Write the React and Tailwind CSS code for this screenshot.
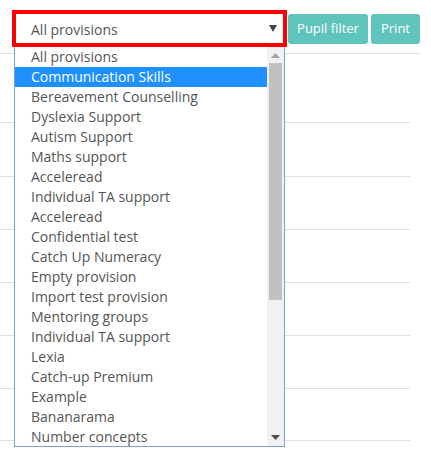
const items = [
  'All provisions',
  'Communication Skills',
  'Bereavement Counselling',
  'Dyslexia Support',
  'Autism Support',
  'Maths support',
  'Acceleread',
  'Individual TA support',
  'Acceleread',
  'Confidential test',
  'Catch Up Numeracy',
  'Empty provision',
  'Import test provision',
  'Mentoring groups',
  'Individual TA support',
  'Lexia',
  'Catch-up Premium',
  'Example',
  'Bananarama',
  'Number concepts',
]

const App = () => {
  return (
    <div className="relative w-[431px] h-[458px] bg-white overflow-hidden text-[#555] font-['Open_Sans',sans-serif]">
      {/* toolbar */}
      <div className="h-[53px] pt-[10px] pl-[12px] flex items-start">
        <div className="w-[275px] h-[37px] border-4 border-[#ff0000] flex items-center justify-between pl-[15px] pr-[6px] bg-white">
          <span className="text-[14px] mt-[1px]">All provisions</span>
          <svg width="8" height="7" viewBox="0 0 8 7" className="mt-[-1px]">
            <path d="M0 0 L8 0 L4 7 Z" fill="#444" />
          </svg>
        </div>
        <button className="ml-[1px] mt-[4px] h-[30px] w-[80px] rounded-[3px] bg-[#5fc4bb] text-white text-[13px]">
          Pupil filter
        </button>
        <button className="ml-[3px] mt-[4px] h-[30px] w-[49px] rounded-[3px] bg-[#5fc4bb] text-white text-[13px]">
          Print
        </button>
      </div>

      {/* table behind */}
      <div className="w-[420px] border-t border-[#e0e0e0]">
        <div className="w-[410px]">
          <div className="h-[69px] border-b border-[#e0e0e0]" />
          <div className="h-[54px] border-b border-[#e0e0e0]" />
          <div className="h-[53px] border-b border-[#e0e0e0]" />
          <div className="h-[53px] border-b border-[#e0e0e0]" />
          <div className="h-[53px] border-b border-[#e0e0e0]" />
          <div className="h-[53px] border-b border-[#e0e0e0]" />
          <div className="h-[52px] border-b border-[#e0e0e0]" />
          <div className="h-[53px] border-b border-[#e0e0e0]" />
        </div>
      </div>

      {/* open dropdown */}
      <div className="absolute left-[14px] top-[47px] w-[271px] h-[400px] border border-t-0 border-[#7b9fd8] bg-white flex">
        <ul className="flex-1">
          {items.map((item, i) => (
            <li
              key={i}
              className={
                i === 1
                  ? 'h-[20px] leading-[20px] pl-[16px] text-[14px] whitespace-nowrap bg-[#1e90ff] text-white'
                  : 'h-[20px] leading-[20px] pl-[16px] text-[14px] whitespace-nowrap'
              }
            >
              {item}
            </li>
          ))}
        </ul>
        <div className="w-[17px] bg-[#f1f1f1] flex flex-col">
          <div className="h-[16px] flex items-center justify-center">
            <svg width="9" height="5" viewBox="0 0 9 5">
              <path d="M4.5 0 L9 5 L0 5 Z" fill="#a3a3a3" />
            </svg>
          </div>
          <div className="mx-[2px] h-[237px] bg-[#c1c1c1]" />
          <div className="flex-1" />
          <div className="h-[17px] flex items-center justify-center">
            <svg width="9" height="5" viewBox="0 0 9 5">
              <path d="M0 0 L9 0 L4.5 5 Z" fill="#505050" />
            </svg>
          </div>
        </div>
      </div>
    </div>
  )
}

export default App
